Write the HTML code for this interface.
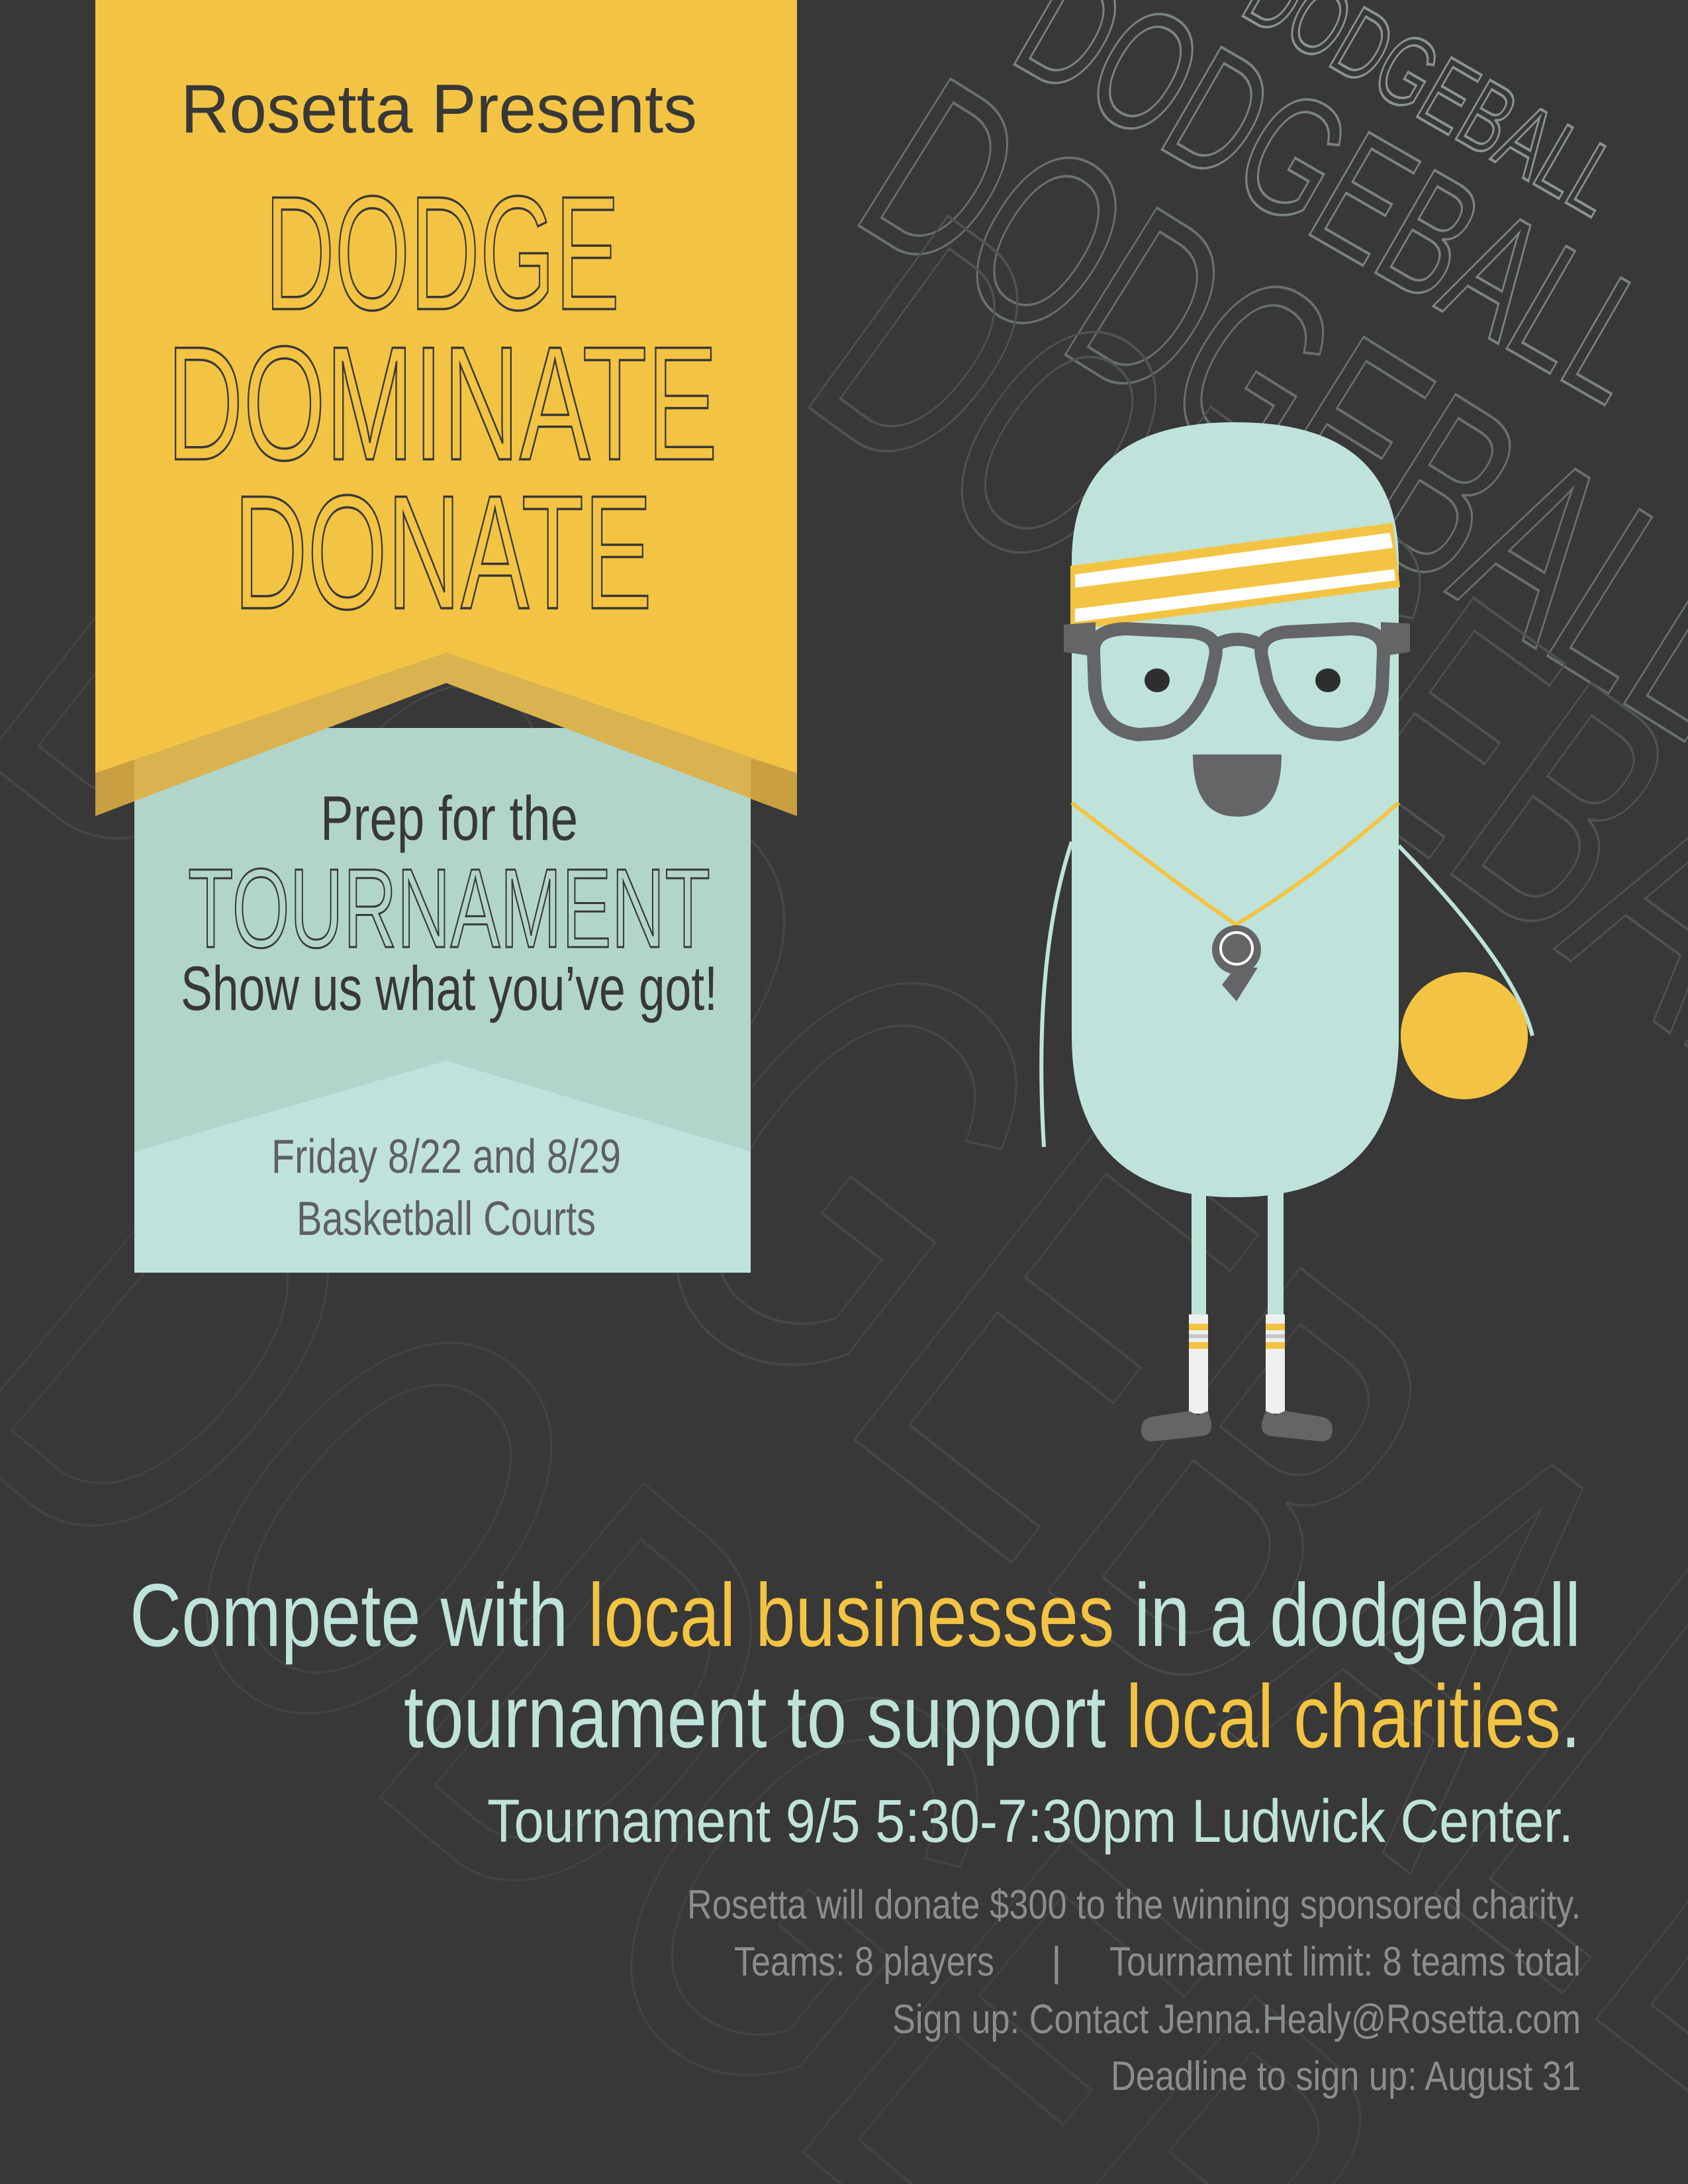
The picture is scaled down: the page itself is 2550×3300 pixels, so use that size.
<!DOCTYPE html>
<html><head><meta charset="utf-8"><style>
html,body{margin:0;padding:0;background:#383838;width:2550px;height:3300px;overflow:hidden;position:relative;}
svg{display:block;position:absolute;top:0;left:0;}
text{font-family:"Liberation Sans Narrow","Liberation Sans",sans-serif;}
</style></head><body>
<svg width="2550" height="3300" viewBox="0 0 2550 3300" xmlns="http://www.w3.org/2000/svg">
<rect width="2550" height="3300" fill="#383838"/>
<g fill="none" stroke-width="4">
<text x="1870" y="20" font-size="150" stroke="#8a9490" transform="rotate(30 1870 20)" textLength="620" lengthAdjust="spacingAndGlyphs">DODGEBALL</text>
<text x="1520" y="90" font-size="260" stroke="#7a8480" transform="rotate(30 1520 90)" textLength="1050" lengthAdjust="spacingAndGlyphs">DODGEBALL</text>
<text x="1280" y="330" font-size="380" stroke="#69716e" transform="rotate(32 1280 330)" textLength="1500" lengthAdjust="spacingAndGlyphs">DODGEBALL</text>
<text x="1200" y="600" font-size="520" stroke="#4f5351" transform="rotate(36 1200 600)" textLength="2000" lengthAdjust="spacingAndGlyphs">DODGEBALL</text>
<text x="-60" y="1120" font-size="900" stroke="#474747" transform="rotate(38 -60 1120)" textLength="3400" lengthAdjust="spacingAndGlyphs">DODGEBALL</text>
<text x="-100" y="2150" font-size="900" stroke="#434343" transform="rotate(40 -100 2150)" textLength="3400" lengthAdjust="spacingAndGlyphs">DODGEBALL</text>
</g>
<rect x="203" y="1100" width="931" height="823" fill="#b2d5cb"/>
<polygon points="203,1740 674,1603 1134,1740 1134,1923 203,1923" fill="#bfe3da"/>
<polygon points="144,0 1204,0 1204,1233 674,1032 144,1233" fill="#d9b350"/>
<polygon points="144,1168 203,1146 203,1210 144,1233" fill="#c99f42"/>
<polygon points="1204,1168 1134,1146 1134,1207 1204,1233" fill="#c99f42"/>
<polygon points="144,0 1204,0 1204,1168 674,986 144,1168" fill="#f3c443"/>
<text x="663" y="200" font-size="104" fill="#383838" text-anchor="middle" textLength="780" lengthAdjust="spacingAndGlyphs">Rosetta Presents</text>
<g fill="none" stroke="#383838" stroke-width="3.5">
<text x="400" y="467" font-size="245" textLength="536" lengthAdjust="spacingAndGlyphs">DODGE</text>
<text x="252" y="694" font-size="245" textLength="832" lengthAdjust="spacingAndGlyphs">DOMINATE</text>
<text x="353" y="919" font-size="245" textLength="632" lengthAdjust="spacingAndGlyphs">DONATE</text>
</g>
<text x="484" y="1269" font-size="95" fill="#383838" textLength="389" lengthAdjust="spacingAndGlyphs">Prep for the</text>
<text x="284" y="1431" font-size="170" fill="none" stroke="#383838" stroke-width="3" textLength="789" lengthAdjust="spacingAndGlyphs">TOURNAMENT</text>
<text x="273" y="1526" font-size="95" fill="#383838" textLength="811" lengthAdjust="spacingAndGlyphs">Show us what you’ve got!</text>
<text x="410" y="1772" font-size="72" fill="#5f6062" textLength="528" lengthAdjust="spacingAndGlyphs">Friday 8/22 and 8/29</text>
<text x="448" y="1866" font-size="72" fill="#5f6062" textLength="452" lengthAdjust="spacingAndGlyphs">Basketball Courts</text>
<g>
<path d="M1619,1272 Q1560,1450 1577,1733" fill="none" stroke="#bfe3da" stroke-width="6"/>
<path d="M2113,1278 Q2290,1460 2315,1565" fill="none" stroke="#bfe3da" stroke-width="6"/>
<circle cx="2212" cy="1565" r="96" fill="#f3c443"/>
<rect x="1800" y="1780" width="22" height="210" fill="#bfe3da"/>
<rect x="1915" y="1780" width="24" height="210" fill="#bfe3da"/>
<rect x="1796" y="1986" width="29" height="150" fill="#eef0f0"/>
<rect x="1912" y="1986" width="29" height="150" fill="#eef0f0"/>
<rect x="1796" y="2000" width="29" height="10" fill="#f3c443"/>
<rect x="1796" y="2016" width="29" height="6" fill="#c8c8c8"/>
<rect x="1796" y="2028" width="29" height="10" fill="#f3c443"/>
<rect x="1912" y="2000" width="29" height="10" fill="#f3c443"/>
<rect x="1912" y="2016" width="29" height="6" fill="#c8c8c8"/>
<rect x="1912" y="2028" width="29" height="10" fill="#f3c443"/>
<path d="M1796,2132 L1810,2138 L1825,2132 L1830,2150 Q1832,2168 1815,2170 L1740,2178 Q1724,2178 1724,2160 Q1724,2142 1745,2140 Z" fill="#646567"/>
<path d="M1941,2132 L1927,2138 L1912,2132 L1906,2150 Q1904,2168 1921,2170 L1996,2178 Q2013,2178 2013,2160 Q2013,2142 1992,2140 Z" fill="#646567"/>
<path d="M1619,849 Q1619,638 1866,638 Q2113,638 2113,849 L2113,1565 Q2113,1809 1866,1809 Q1619,1809 1619,1565 Z" fill="#bfe3da"/>
<polygon points="1617,855 2104,790 2115,887 1617,952" fill="#f3c443"/>
<polygon points="1624,868 2100,805 2104,828 1624,888" fill="#ffffff"/>
<polygon points="1624,920 2106,860 2108,877 1624,940" fill="#ffffff"/>
<path d="M1607,944 L1655,940 L1655,992 L1607,985 Z" fill="#646567"/>
<path d="M2130,942 L2086,940 L2086,992 L2130,985 Z" fill="#646567"/>
<path d="M1652,985 Q1650,952 1700,950 L1800,955 Q1842,960 1836,992 L1828,1030 Q1800,1104 1750,1108 L1720,1110 Q1662,1104 1654,1040 Z" fill="none" stroke="#646567" stroke-width="20"/>
<path d="M2090,985 Q2092,952 2042,950 L1942,955 Q1900,960 1906,992 L1914,1030 Q1942,1104 1992,1108 L2022,1110 Q2080,1104 2088,1040 Z" fill="none" stroke="#646567" stroke-width="20"/>
<path d="M1836,964 Q1868,948 1906,964 L1906,986 Q1868,966 1836,986 Z" fill="#646567"/>
<ellipse cx="1748" cy="1028" rx="19" ry="18" fill="#2e2e2e"/>
<ellipse cx="2006" cy="1028" rx="19" ry="18" fill="#2e2e2e"/>
<path d="M1802,1140 L1936,1140 Q1936,1234 1869,1234 Q1802,1234 1802,1140 Z" fill="#646567"/>
<path d="M1619,1213 Q1770,1330 1867,1397 Q1980,1330 2113,1213" fill="none" stroke="#f3c443" stroke-width="6"/>
<polygon points="1846,1488 1868,1513 1900,1462 1866,1462" fill="#646567"/>
<circle cx="1868" cy="1435" r="37" fill="#646567"/>
<circle cx="1868" cy="1433" r="24" fill="#646567" stroke="#ffffff" stroke-width="4"/>
</g>
<text x="2388" y="2487" font-size="135" text-anchor="end" fill="#bfe3da" textLength="2192" lengthAdjust="spacingAndGlyphs">Compete with <tspan fill="#f3c443">local businesses</tspan> in a dodgeball</text>
<text x="2388" y="2640" font-size="135" text-anchor="end" fill="#bfe3da" textLength="1778" lengthAdjust="spacingAndGlyphs">tournament to support <tspan fill="#f3c443">local charities</tspan>.</text>
<text x="2377" y="2783" font-size="92" text-anchor="end" fill="#bfe3da" textLength="1641" lengthAdjust="spacingAndGlyphs">Tournament 9/5 5:30-7:30pm Ludwick Center.</text>
<g font-size="62" fill="#8a8e8d" text-anchor="end">
<text x="2388" y="2899" textLength="1350" lengthAdjust="spacingAndGlyphs">Rosetta will donate $300 to the winning sponsored charity.</text>
<text x="1502" y="2985" textLength="393" lengthAdjust="spacingAndGlyphs">Teams: 8 players</text>
<text x="1604" y="2985">|</text>
<text x="2388" y="2985" textLength="712" lengthAdjust="spacingAndGlyphs">Tournament limit: 8 teams total</text>
<text x="2388" y="3072" textLength="1040" lengthAdjust="spacingAndGlyphs">Sign up: Contact Jenna.Healy@Rosetta.com</text>
<text x="2388" y="3158" textLength="710" lengthAdjust="spacingAndGlyphs">Deadline to sign up: August 31</text>
</g>
</svg>
</body></html>
